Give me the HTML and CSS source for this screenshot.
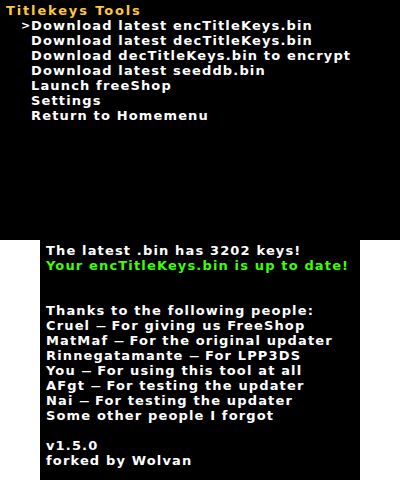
FILE: index.html
```html
<!DOCTYPE html>
<html>
<head>
<meta charset="utf-8">
<link rel="stylesheet" href="styles.css">
</head>
<body>
<div class="top-screen">
  <div class="title">Titlekeys Tools</div>
  <ul class="menu">
    <li class="item selected"><span class="cursor">&gt;</span><span>Download latest encTitleKeys.bin</span></li>
    <li class="item"><span class="cursor"></span><span>Download latest decTitleKeys.bin</span></li>
    <li class="item"><span class="cursor"></span><span>Download decTitleKeys.bin to encrypt</span></li>
    <li class="item"><span class="cursor"></span><span>Download latest seeddb.bin</span></li>
    <li class="item"><span class="cursor"></span><span>Launch freeShop</span></li>
    <li class="item"><span class="cursor"></span><span>Settings</span></li>
    <li class="item"><span class="cursor"></span><span>Return to Homemenu</span></li>
  </ul>
</div>
<div class="bottom-screen">
  <div class="line">The latest .bin has 3202 keys!</div>
  <div class="line ok">Your encTitleKeys.bin is up to date!</div>
  <div class="line"></div>
  <div class="line"></div>
  <div class="line">Thanks to the following people:</div>
  <div class="line">Cruel <span class="dash">—</span> For giving us FreeShop</div>
  <div class="line">MatMaf <span class="dash">—</span> For the original updater</div>
  <div class="line">Rinnegatamante <span class="dash">—</span> For LPP3DS</div>
  <div class="line">You <span class="dash">—</span> For using this tool at all</div>
  <div class="line">AFgt <span class="dash">—</span> For testing the updater</div>
  <div class="line">Nai <span class="dash">—</span> For testing the updater</div>
  <div class="line">Some other people I forgot</div>
  <div class="line"></div>
  <div class="line">v1.5.0</div>
  <div class="line">forked by Wolvan</div>
</div>
</body>
</html>
```
FILE: styles.css
```css
html, body {
  margin: 0;
  padding: 0;
  background: #ffffff;
}
body {
  width: 400px;
  height: 480px;
  font-family: "DejaVu Sans", sans-serif;
  font-weight: bold;
  font-size: 13px;
  line-height: 15px;
  letter-spacing: 1.15px;
  color: #ffffff;
}
.top-screen {
  width: 400px;
  height: 240px;
  box-sizing: border-box;
  background: #000000;
  padding: 3px 0 0 6px;
}
.title {
  color: #ffc83a;
  height: 15px;
  letter-spacing: 1.85px;
}
.menu {
  list-style: none;
  margin: 0;
  padding: 0;
}
.item {
  display: flex;
  height: 15px;
  white-space: nowrap;
}
.cursor {
  width: 25px;
  box-sizing: border-box;
  padding-left: 15px;
  flex: none;
  font-size: 11px;
  letter-spacing: 0;
  overflow: hidden;
}
.bottom-screen {
  width: 320px;
  height: 240px;
  margin: 0 auto;
  box-sizing: border-box;
  background: #000000;
  padding: 3px 0 0 6px;
}
.line {
  height: 15px;
  white-space: nowrap;
}
.dash {
  font-size: 10px;
  letter-spacing: 0;
}
.ok {
  color: #3cff00;
}
```
